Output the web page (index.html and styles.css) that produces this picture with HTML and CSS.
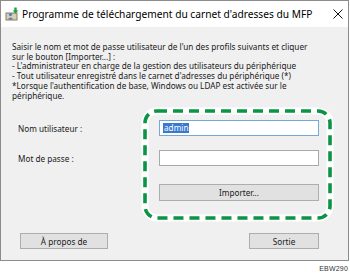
FILE: index.html
```html
<!DOCTYPE html>
<html lang="fr">
<head>
<meta charset="utf-8">
<title>Programme de téléchargement du carnet d'adresses du MFP</title>
<link rel="stylesheet" href="styles.css">
</head>
<body>
<div class="window">
  <div class="titlebar">
    <svg class="app-icon" width="14" height="14" viewBox="0 0 14 14">
      <rect x="1" y="6" width="11" height="7" fill="#d9ceb4" stroke="#8a7f66" stroke-width="1"/>
      <circle cx="5.5" cy="7.5" r="1.6" fill="#4a7fc0"/>
      <path d="M2.8 12.5 Q5.5 8.6 8.2 12.5 Z" fill="#4a7fc0"/>
      <rect x="9.3" y="0.5" width="2.4" height="3.5" fill="#1fa23c"/>
      <path d="M7.8 3.6 L13.2 3.6 L10.5 6.8 Z" fill="#1fa23c"/>
    </svg>
    <span class="title">Programme de téléchargement du carnet d'adresses du MFP</span>
    <svg class="close" width="10" height="10" viewBox="0 0 10 10">
      <path d="M0.5 0.5 L9.5 9.5 M9.5 0.5 L0.5 9.5" stroke="#111" stroke-width="1" fill="none"/>
    </svg>
  </div>
  <div class="content">
    <p class="intro">Saisir le nom et mot de passe utilisateur de l'un des profils suivants et cliquer<br>sur le bouton [Importer...] :<br>- L'administrateur en charge de la gestion des utilisateurs du périphérique<br>- Tout utilisateur enregistré dans le carnet d'adresses du périphérique (*)<br>*Lorsque l'authentification de base, Windows ou LDAP est activée sur le<br>périphérique.</p>
    <div class="form">
      <label class="label">Nom utilisateur :</label>
      <div class="field focused"><span class="sel">admin</span></div>
      <label class="label row2">Mot de passe :</label>
      <div class="field row2"></div>
      <div class="btn import">Importer...</div>
    </div>
    <div class="footer">
      <div class="btn about">À propos de</div>
      <div class="btn quit">Sortie</div>
    </div>
  </div>
  <svg class="callout" width="200" height="122" viewBox="0 0 200 122">
    <rect x="6" y="6" width="185" height="107" rx="12" ry="12" fill="none" stroke="#ffffff" stroke-width="7"/>
    <rect x="6" y="6" width="185" height="107" rx="12" ry="12" fill="none" stroke="#0a9444" stroke-width="3.6" stroke-dasharray="10 6"/>
  </svg>
</div>
<div class="code">EBW290</div>
</body>
</html>
```

FILE: styles.css
```css
html, body {
  margin: 0;
  padding: 0;
  background: #ffffff;
}

body {
  width: 350px;
  height: 276px;
  overflow: hidden;
  font-family: "Noto Sans", "Liberation Sans", sans-serif;
  color: #1a1a1a;
}

.window {
  position: relative;
  box-sizing: border-box;
  width: 349px;
  height: 261px;
  border: 1px solid #8c8c8c;
  background: #f0f0f0;
  display: flex;
  flex-direction: column;
}

.titlebar {
  height: 26px;
  flex: none;
  background: #ffffff;
  display: flex;
  align-items: center;
  padding-left: 4px;
}

.app-icon {
  flex: none;
  margin-right: 3px;
  margin-top: -1px;
}

.title {
  font-size: 10.2px;
  color: #000;
  white-space: nowrap;
  flex: 1;
  margin-top: -1px;
}

.close {
  flex: none;
  margin-right: 5px;
  margin-top: -1px;
}

.content {
  flex: 1;
  padding: 15px 11px 11px 11px;
  display: flex;
  flex-direction: column;
}

.intro {
  margin: 0;
  font-size: 8.2px;
  line-height: 9.7px;
  white-space: nowrap;
}

.form {
  margin: 20px 0 0 6px;
  display: grid;
  grid-template-columns: 141px 160px;
  grid-template-rows: 16px 16px 17px;
  row-gap: 14px;
  align-items: center;
}

.form .row2 {
  grid-row: 2;
}

.label {
  font-size: 8.2px;
  grid-column: 1;
}

.field {
  grid-column: 2;
  box-sizing: border-box;
  height: 16px;
  background: #ffffff;
  border: 1px solid #a9a9a9;
  display: flex;
  align-items: center;
  padding-left: 3px;
}

.field.focused {
  border-color: #7aa6d6;
}

.sel {
  background: #3979cf;
  color: #ffffff;
  font-size: 8.2px;
  line-height: 10px;
  padding: 0 1px;
}

.btn {
  box-sizing: border-box;
  background: #e1e1e1;
  border: 1px solid #adadad;
  font-size: 8.2px;
  display: flex;
  align-items: center;
  justify-content: center;
}

.import {
  grid-column: 2;
  grid-row: 3;
  height: 17px;
  margin-top: 7px;
}

.footer {
  margin: auto 18px 0 8px;
  display: flex;
  justify-content: space-between;
}

.about {
  width: 88px;
  height: 16px;
}

.quit {
  width: 70px;
  height: 16px;
}

.callout {
  position: absolute;
  left: 138px;
  top: 104px;
}

.code {
  text-align: right;
  padding-right: 2px;
  margin-top: 4px;
  font-family: "Liberation Sans", sans-serif;
  font-size: 7px;
  color: #333;
  letter-spacing: 0.2px;
}
```
